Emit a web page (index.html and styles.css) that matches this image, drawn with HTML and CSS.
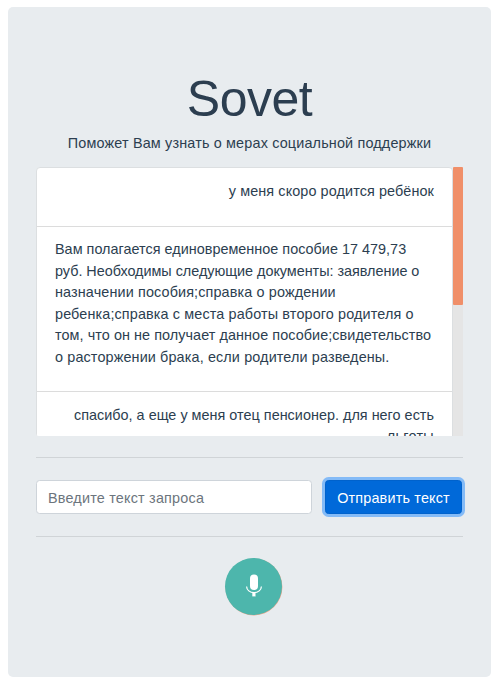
FILE: index.html
```html
<!DOCTYPE html>
<html lang="ru">
<head>
<meta charset="utf-8">
<title>Sovet</title>
<link rel="stylesheet" href="styles.css">
</head>
<body>
<main class="jumbotron">
  <h1 class="title">Sovet</h1>
  <p class="lead">Поможет Вам узнать о мерах социальной поддержки</p>
  <div class="chat">
    <ul class="messages">
      <li class="message user first">у меня скоро родится ребёнок</li>
      <li class="message bot">Вам полагается единовременное пособие 17 479,73<br><span class="tight">руб. Необходимы следующие документы: заявление о</span><br><span class="loose">назначении пособия;справка о рождении</span><br><span class="loose">ребенка;справка с места работы второго родителя о</span><br><span class="medium">том, что он не получает данное пособие;свидетельство</span><br><span class="loose">о расторжении брака, если родители разведены.</span></li>
      <li class="message user last">спасибо, а еще у меня отец пенсионер. для него есть<br><span class="wide">льготы</span></li>
    </ul>
    <div class="track"><div class="thumb"></div></div>
  </div>
  <hr>
  <form class="query">
    <input class="field" type="text" placeholder="Введите текст запроса">
    <button class="send" type="button">Отправить текст</button>
  </form>
  <hr>
  <button class="mic" type="button" aria-label="Микрофон">
    <svg width="18" height="24" viewBox="0 0 18 24">
      <rect x="5" y="0.5" width="8" height="15.5" rx="4" fill="#fff"/>
      <path d="M1.6 12.5a7.4 6.2 0 0 0 14.8 0" fill="none" stroke="#fff" stroke-width="1.2"/>
      <path d="M7.3 18.6h3.2v3.8H7.3z" fill="#fff"/>
    </svg>
  </button>
</main>
</body>
</html>
```
FILE: styles.css
```css
* { box-sizing: border-box; }
body {
  margin: 0;
  padding: 7px 11px 0 8px;
  background: #fff;
  color: #2c3e50;
  font: 14.4px/21.6px "Liberation Sans", Arial, sans-serif;
}
.jumbotron {
  height: 670px;
  padding: 64px 28px 0;
  border-radius: 5px;
  background: #e8ecef;
}
.title {
  margin: 0;
  font-size: 50px;
  line-height: 56px;
  font-weight: 400;
  text-align: center;
  letter-spacing: -0.5px;
}
.lead { margin: 5.6px 0 12.8px; text-align: center; white-space: nowrap; letter-spacing: 0.165px; }
.chat { display: flex; height: 269px; overflow: hidden; border-bottom-left-radius: 3px; }
.messages {
  flex: 1;
  height: 300px;
  margin: 0;
  padding: 0;
  list-style: none;
  border: 1px solid #dcdfe1;
  border-radius: 4px;
  background: #fff;
}
.message { padding: 12px 18px 0; border-bottom: 1px solid #dcdcdc; white-space: nowrap; letter-spacing: 0.02px; }
.tight { letter-spacing: -0.02px; }
.medium { letter-spacing: 0.07px; }
.loose { letter-spacing: 0.13px; }
.wide { letter-spacing: 0.3px; }
.user { height: 59px; padding-top: 13px; text-align: right; }
.first { letter-spacing: 0.1px; }
.bot { height: 165px; }
.last { height: 74px; border-bottom: 0; line-height: 21px; }
.track { width: 10px; background: #e5e5e5; }
.thumb { height: 138px; border-radius: 1px; background: #f08f69; }
hr { margin: 21px 0; border: 0; border-top: 1px solid #d0d4d7; }
.query { display: flex; gap: 13px; height: 36px; margin: 0; padding: 1px 0; }
.field, .send { height: 34px; font: inherit; border-radius: 3.6px; }
.field { width: 276px; padding: 2px 11px 0; border: 1px solid #ced4da; background: #fff; letter-spacing: 0.2px; }
.field::placeholder { color: #6c757d; opacity: 1; }
.send {
  width: 137px;
  padding: 3px 0 0;
  border: 1px solid #0062cc;
  background: #0069d9;
  color: #fff;
  white-space: nowrap;
  letter-spacing: 0.18px;
  box-shadow: 0 0 0 3px #84bbf7;
}
.mic {
  display: flex;
  align-items: center;
  justify-content: center;
  width: 57px;
  height: 57px;
  margin: 0 0 0 189px;
  padding: 0;
  border: 0;
  border-radius: 50%;
  background: #4db6ac;
  box-shadow: 0.4px 0.4px 0.5px #f0a58a;
}
```
